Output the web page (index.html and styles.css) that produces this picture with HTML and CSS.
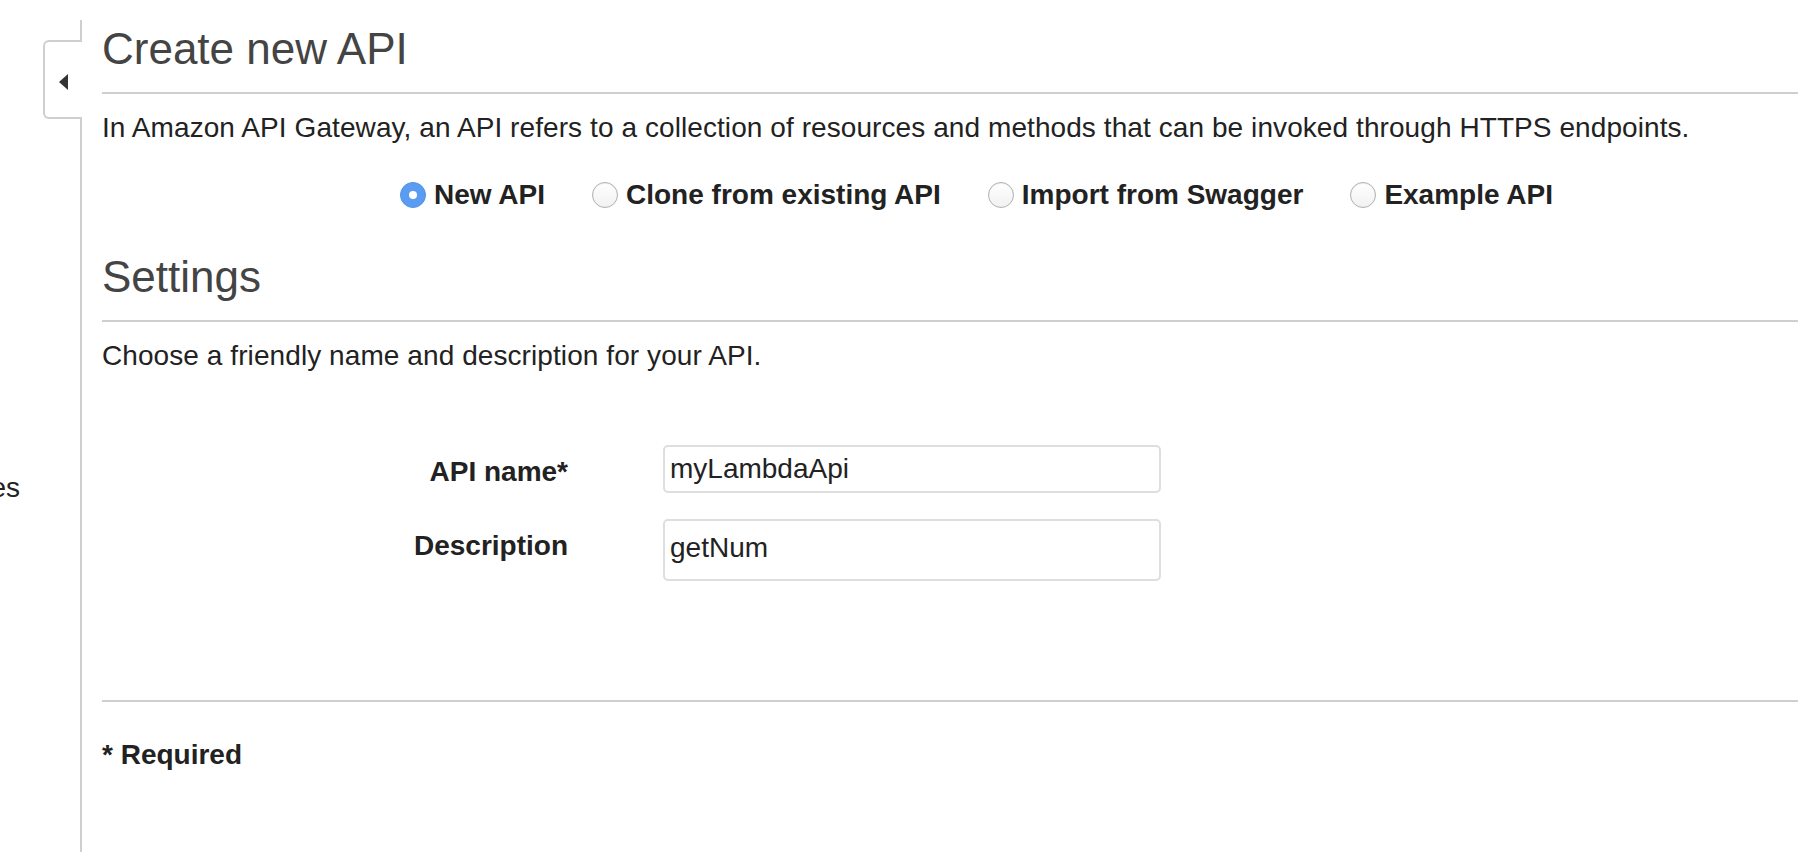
FILE: index.html
```html
<!DOCTYPE html>
<html lang="en">
<head>
<meta charset="utf-8">
<title>Create new API</title>
<link rel="stylesheet" href="styles.css">
</head>
<body>
<div class="page">
  <aside class="sidebar">
    <div class="tab"><span class="tri"></span></div>
    <div class="nav-item"><span>Client Certificates</span></div>
  </aside>
  <main class="main">
    <h1 class="title">Create new API</h1>
    <p class="intro">In Amazon API Gateway, an API refers to a collection of resources and methods that can be invoked through HTTPS endpoints.</p>
    <div class="choices">
      <label class="choice"><span class="radio checked"></span>New API</label>
      <label class="choice"><span class="radio"></span>Clone from existing API</label>
      <label class="choice"><span class="radio"></span>Import from Swagger</label>
      <label class="choice"><span class="radio"></span>Example API</label>
    </div>
    <h2 class="title section">Settings</h2>
    <p class="intro">Choose a friendly name and description for your API.</p>
    <div class="form">
      <label class="flabel" for="apiname">API name*</label>
      <input class="field" id="apiname" type="text" value="myLambdaApi">
      <label class="flabel" for="apidesc">Description</label>
      <textarea class="field area" id="apidesc">getNum</textarea>
    </div>
    <div class="rule"></div>
    <div class="required">* Required</div>
  </main>
</div>
</body>
</html>
```

FILE: styles.css
```css
html, body {
  margin: 0;
  padding: 0;
  background: #fff;
}
body {
  font-family: "Liberation Sans", Arial, Helvetica, sans-serif;
  color: #222;
}
.page {
  display: flex;
  height: 100vh;
  overflow: hidden;
}
.sidebar {
  flex: 0 0 82px;
  box-sizing: border-box;
  margin-top: 20px;
  height: calc(100vh - 20px);
  border-right: 2px solid #cfcfcf;
  position: relative;
}
.tab {
  position: absolute;
  top: 20px;
  right: -2px;
  width: 39px;
  height: 79px;
  box-sizing: border-box;
  border: 2px solid #cfcfcf;
  border-right: none;
  border-radius: 6px 0 0 6px;
  background: #fff;
  display: flex;
  align-items: center;
  justify-content: center;
  padding-top: 5px;
}
.tri {
  width: 0;
  height: 0;
  border-top: 8px solid transparent;
  border-bottom: 8px solid transparent;
  border-right: 9px solid #333;
}
.nav-item {
  margin-top: 451px;
  width: 20px;
  overflow: hidden;
  display: flex;
  justify-content: flex-end;
  white-space: nowrap;
  font-size: 28px;
  line-height: 34px;
  color: #222;
}
.main {
  flex: 1;
  min-width: 0;
  padding-left: 20px;
}
.title {
  margin: 24px 0 0;
  font-size: 44px;
  font-weight: normal;
  line-height: 50px;
  color: #444;
  padding-bottom: 18px;
  border-bottom: 2px solid #cfcfcf;
}
.intro {
  margin: 17px 0 0;
  font-size: 28px;
  line-height: 34px;
  letter-spacing: 0.08px;
}
.choices {
  display: flex;
  align-items: center;
  gap: 47px;
  margin-top: 33px;
  padding-left: 298px;
}
.choice {
  display: flex;
  align-items: center;
  gap: 8px;
  font-weight: bold;
  font-size: 28px;
  line-height: 34px;
  color: #222;
}
.radio {
  width: 26px;
  height: 26px;
  box-sizing: border-box;
  border-radius: 50%;
  border: 1px solid #b0b0b0;
  background: linear-gradient(#ffffff, #f1f1f1);
  box-shadow: inset 0 1px 1px rgba(0,0,0,0.06);
}
.radio.checked {
  background: #5a9cf2;
  border-color: #4f92ea;
  box-shadow: none;
  display: flex;
  align-items: center;
  justify-content: center;
}
.radio.checked::after {
  content: "";
  width: 8px;
  height: 8px;
  border-radius: 50%;
  background: #fff;
}
.section {
  margin-top: 40px;
}
.form {
  display: grid;
  grid-template-columns: 466px 498px;
  column-gap: 95px;
  row-gap: 26px;
  margin-top: 72px;
  align-items: start;
}
.flabel {
  text-align: right;
  font-weight: bold;
  font-size: 28px;
  line-height: 34px;
  padding-top: 10px;
  color: #222;
}
.field {
  box-sizing: border-box;
  width: 498px;
  height: 48px;
  margin: 0;
  border: 2px solid #dedede;
  border-radius: 5px;
  padding: 0 5px;
  font-family: "Liberation Sans", Arial, Helvetica, sans-serif;
  font-size: 28px;
  color: #222;
  background: #fff;
  outline: none;
}
.area {
  display: block;
  height: 62px;
  padding: 10px 5px 0;
  line-height: 34px;
  resize: none;
  overflow: hidden;
}
.rule {
  margin-top: 119px;
  border-top: 2px solid #cfcfcf;
}
.required {
  margin-top: 36px;
  font-weight: bold;
  font-size: 28px;
  line-height: 34px;
  color: #222;
}
```
